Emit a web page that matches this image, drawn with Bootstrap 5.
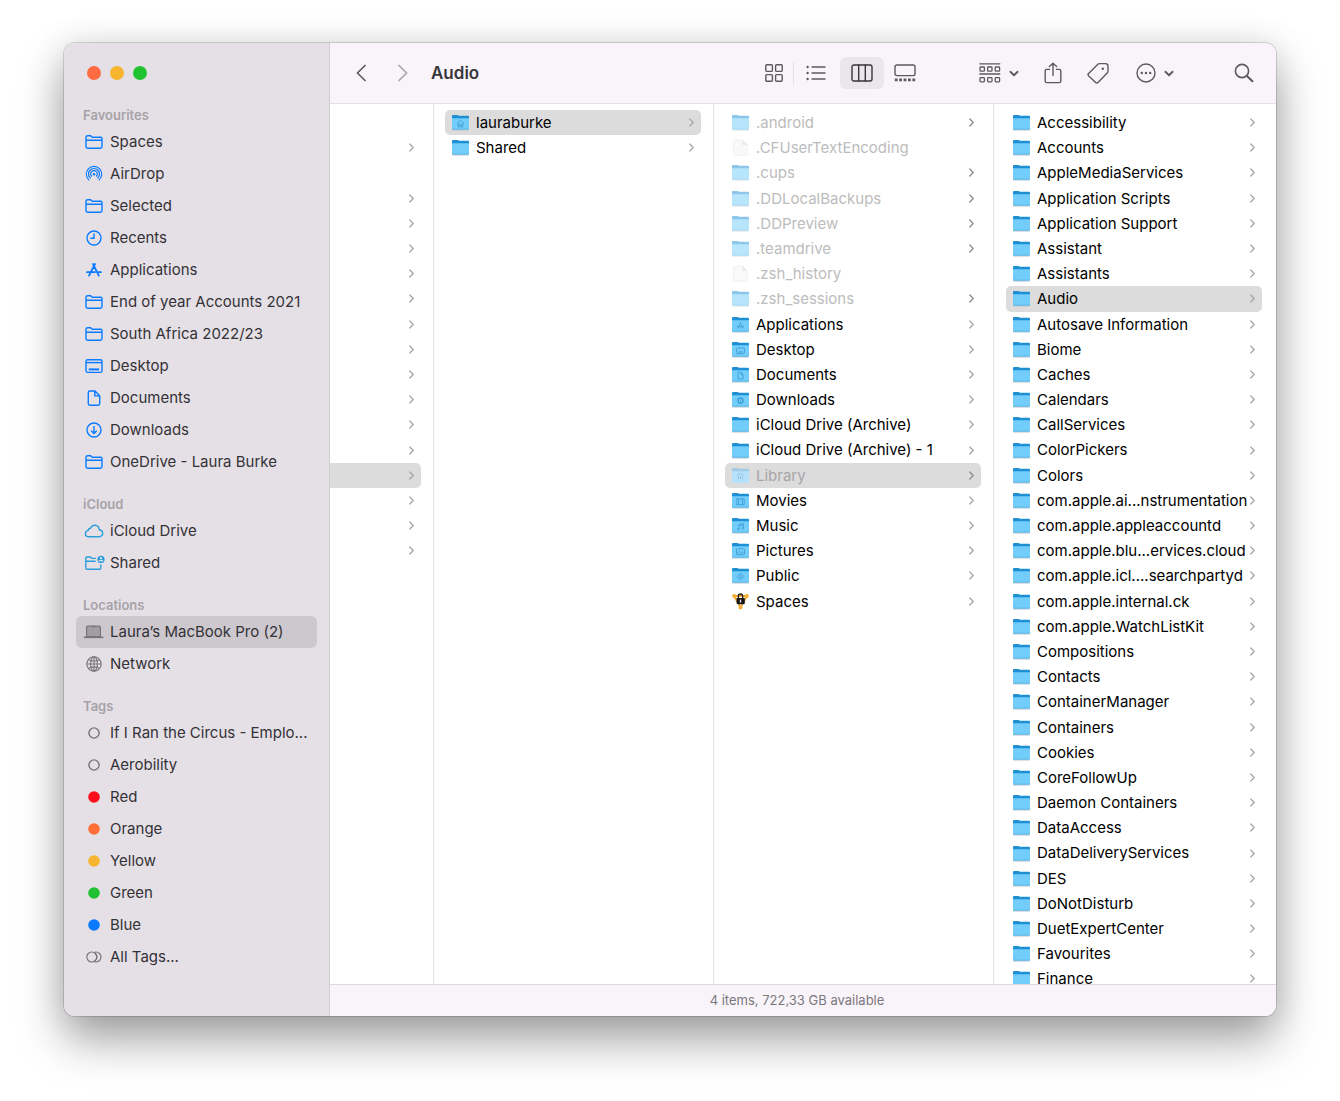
<!DOCTYPE html>
<html lang="en">
<head>
<meta charset="utf-8">
<meta name="viewport" content="width=device-width, initial-scale=1">
<title>Audio</title>
<link rel="stylesheet" href="https://cdn.jsdelivr.net/npm/bootstrap@5.3.0/dist/css/bootstrap.min.css">
<style>
  body { font-family: Inter, "Liberation Sans", sans-serif; font-size: 15px; color: #000; background: #fff; padding: 43px 64px 85px; height: 100vh; }
  a { color: inherit; text-decoration: none; }
  .finder { height: 100%; border-radius: 11px; background: #fff; box-shadow: 0 0 0 1px rgba(0,0,0,.14), 0 24px 46px rgba(0,0,0,.36), 0 0 34px rgba(0,0,0,.1); }

  /* sidebar */
  .side { flex: 0 0 266px; background: #e5e0e6; border-right: 1px solid #d0ccd1; padding: 0 12px; color: #343236; }
  .lights { height: 62px; padding-left: 11px; padding-bottom: 2px; gap: 9px; }
  .light { width: 14px; height: 14px; border: 0; padding: 0; border-radius: 50%; }
  .side-title { font-size: 13px; font-weight: 600; line-height: 20px; color: #a7a2a8; margin: 0 0 1px; padding-left: 7px; }
  .side-group { margin-bottom: 16px; }
  .side-row { height: 32px; padding-left: 7px; gap: 5px; border-radius: 6px; white-space: nowrap; }
  .side-row.current { background: #cdc8ce; }
  .side-row svg { flex: none; width: 22px; height: 20px; color: #0a7bff; fill: none; stroke: currentColor; stroke-width: 1.4; }
  .side-row svg.gray { color: #77747a; }
  .side-row svg.sky { color: #2a9fdc; }

  /* toolbar */
  .bar { flex: 0 0 61px; background: #f9f4fa; border-bottom: 1px solid #e3dfe4; padding: 0 10px 0 10px; }
  .tool { height: 32px; padding: 0; border: 0; border-radius: 6px; background: transparent; color: #5c595e; }
  .tool svg { fill: none; stroke: currentColor; stroke-width: 1.4; stroke-linecap: round; stroke-linejoin: round; display: block; }
  .tool.pressed { background: #ebe6ec; color: #38363a; }
  .w-nav { width: 42px; } .w-sm { width: 38px; } .w-md { width: 44px; } .w-lg { width: 60px; }
  .views { margin-right: 43px; }
  .views .list-tool { margin-right: 2px; }
  .actions { margin-right: 37px; }
  .actions .lead-tool { margin-right: 2px; }
  .actions .tag-tool { margin: 0 5px 0 1px; }
  .rule { width: 1px; height: 23px; background: #e5e0e6; }
  .bar h1 { font-size: 17px; font-weight: 600; line-height: 24px; color: #38363a; margin: 0; padding-left: 7px; }

  /* columns */
  .pane { flex: 0 0 280px; border-right: 1px solid #e3e3e3; padding: 6px 12px 0 11px; overflow: hidden; }
  .pane.cut { flex: 1 1 0; padding-left: 0; }
  .pane.last { flex-basis: 282px; padding: 6px 14px 0 12px; border-right: 0; }
  .entry { line-height: 1.68; padding: 0 7px; border-radius: 5px; white-space: nowrap; }
  .entry::before { content: "\200b"; }
  .entry.picked { background: #dcdcdc; }
  .cut .entry.picked { border-radius: 0 5px 5px 0; }
  .entry .pic { flex: none; width: 17px; height: 17px; margin-right: 7px; }
  .entry .arrow { flex: none; width: 5px; height: 9px; margin-left: auto; fill: none; stroke: #a6a6a6; stroke-width: 1.3; stroke-linecap: round; stroke-linejoin: round; }
  .entry.faded { color: #bcbcbc; }
  .entry.faded .pic { opacity: .5; }
  .entry.faded .arrow { stroke: #8c8c8c; }
  .entry.faded.picked { color: #a6a6a6; }
  .entry.faded.picked .pic { opacity: 1; }

  .status { flex: 0 0 32px; background: #f9f4fa; border-top: 1px solid #dcd8dd; font-size: 13px; color: #7b787d; padding-right: 12px; }
</style>
<script src="https://cdn.jsdelivr.net/npm/bootstrap@5.3.0/dist/js/bootstrap.bundle.min.js"></script>
</head>
<body>
<svg class="d-none" aria-hidden="true">
  <symbol id="s-folder" viewBox="0 0 22 20"><path d="M3 15V5.2Q3 3.7 4.5 3.7H7.6L9.2 5.2H17.5Q19 5.2 19 6.7V14.6Q19 16.2 17.4 16.2H4.6Q3 16.2 3 14.6ZM3 8.2H19"/></symbol>
  <symbol id="s-airdrop" viewBox="0 0 22 20"><g stroke-width="1.2"><path d="M6.3 16.2A7.7 7.7 0 1 1 15.7 16.2M7.6 14.3A5.5 5.5 0 1 1 14.4 14.3M8.9 12.5A3.3 3.3 0 1 1 13.1 12.5"/></g><circle cx="11" cy="10.2" r="1.2" fill="currentColor" stroke="none"/></symbol>
  <symbol id="s-clock" viewBox="0 0 22 20"><circle cx="11" cy="10" r="7"/><path d="M11 5.4V10.3H7.4"/></symbol>
  <symbol id="s-apps" viewBox="0 0 22 20"><path stroke-width="1.8" stroke-linecap="round" d="M10 4 15.8 15.6M12 4 6 15.6M4 12.2H12M15.2 12.2H18"/></symbol>
  <symbol id="s-desktop" viewBox="0 0 22 20"><rect x="3" y="3.8" width="16" height="12.6" rx="1.6"/><path d="M3 6.6H19"/><path stroke-width="2" d="M5.8 13.4H16.2"/></symbol>
  <symbol id="s-doc" viewBox="0 0 22 20"><path d="M12 3H6.8Q5.3 3 5.3 4.5V15.8Q5.3 17.2 6.8 17.2H15.2Q16.7 17.2 16.7 15.8V7.8ZM11.8 3.2V7.9H16.5"/></symbol>
  <symbol id="s-down" viewBox="0 0 22 20"><circle cx="11" cy="10" r="7"/><path d="M11 6V13.2M8.3 10.8 11 13.5 13.7 10.8"/></symbol>
  <symbol id="s-cloud" viewBox="0 0 22 20"><path d="M6 15.8Q2.3 15.6 2.4 12.4 2.6 9.9 5.2 9.4 5.2 7.3 7.6 7.2 9 4.2 12 4.3 16 4.6 16.3 8.8 19.8 9.5 19.7 12.5 19.4 15.6 16 15.8Z"/></symbol>
  <symbol id="s-shared" viewBox="0 0 22 20"><path d="M12.8 5.4H8.8L7.4 4H4Q2.8 4 2.8 5.2V15Q2.8 16.3 4 16.3H16.4Q17.8 16.3 17.8 15V11.5M2.8 8.2H12.6"/><circle cx="18" cy="6.4" r="3.6" fill="currentColor" stroke="none"/><circle cx="18" cy="5.2" r="1.1" fill="#e5e0e6" stroke="none"/><path d="M16 8.2Q18 6.4 20 8.2" stroke="#e5e0e6" stroke-width="1.2"/></symbol>
  <symbol id="s-laptop" viewBox="0 0 22 20"><path d="M3.6 14.6V5.4Q3.6 4.2 4.8 4.2H16.2Q17.4 4.2 17.4 5.4V14.6Z" fill="#a29ea4" stroke-width="1.2"/><path d="M.8 15.3H20.4" stroke-width="1.6"/><path d="M9 4.6H12"/></symbol>
  <symbol id="s-globe" viewBox="0 0 22 20"><g stroke-width="1.1"><circle cx="11" cy="10" r="7.2"/><ellipse cx="11" cy="10" rx="3.4" ry="7.2"/><path d="M11 2.8V17.2M3.8 10H18.2M5.4 5.8Q11 8.4 16.6 5.8M5.4 14.2Q11 11.6 16.6 14.2"/></g></symbol>
  <symbol id="s-ring" viewBox="0 0 22 20"><circle cx="11" cy="10" r="5.1"/></symbol>
  <symbol id="s-dot" viewBox="0 0 22 20"><circle cx="11" cy="10" r="5.8" fill="currentColor" stroke="none"/></symbol>
  <symbol id="s-all" viewBox="0 0 22 20"><g stroke-width="1.2"><circle cx="8.8" cy="10" r="5"/><path d="M11.6 5.2Q12.2 5 13 5A5 5 0 0 1 13 15Q12.2 15 11.6 14.8"/><path d="M11.8 5.6Q16 10 11.8 14.4" /></g></symbol>

  <symbol id="arrow" viewBox="0 0 5 9"><path d="M.8 1 4.2 4.5.8 8"/></symbol>
  <symbol id="folder" viewBox="0 0 17 17"><path d="M0 15.2H17V15.8Q17 16.4 16.2 16.4H.8Q0 16.4 0 15.8Z" fill="#b9c4cc"/><path d="M0 2Q0 .9 1 .9H5.2Q5.8 .9 6.2 1.3L6.8 1.8H16Q17 1.8 17 2.8V6H0Z" fill="#1d8fd2"/><path d="M0 4.2H17V14.6Q17 15.6 16 15.6H1Q0 15.6 0 14.6Z" fill="#72cdfa"/><path d="M0 14V14.6Q0 15.6 1 15.6H16Q17 15.6 17 14.6V14Q17 14.8 16 14.8H1Q0 14.8 0 14Z" fill="#4fb0e4"/></symbol>
  <symbol id="folder-pale" viewBox="0 0 17 17"><path d="M0 2Q0 .9 1 .9H5.2Q5.8 .9 6.2 1.3L6.8 1.8H16Q17 1.8 17 2.8V6H0Z" fill="#a0cbe6"/><path d="M0 4.2H17V15Q17 16 16 16H1Q0 16 0 15Z" fill="#b6e1fa"/></symbol>
  <symbol id="file" viewBox="0 0 17 17"><path d="M2 1H10.5L15.5 6V15Q15.5 16.3 14.3 16.3H2.6Q1.4 16.3 1.4 15V2Q1.4 1 2 1Z" fill="#f4f4f4" stroke="#e2e2e2" stroke-width=".8"/><path d="M10.5 1V6H15.5Z" fill="#d4d4d4"/></symbol>
  <symbol id="g-home" viewBox="0 0 17 17"><path d="M5 9.5 8.5 6.4 12 9.5M6.2 9V13H7.8V10.5H9.2V13H10.8V9"/></symbol>
  <symbol id="g-apps" viewBox="0 0 17 17"><path d="M8.5 6.5 5.8 12.5M8.5 6.5 11.2 12.5M5 10.7H12"/></symbol>
  <symbol id="g-desk" viewBox="0 0 17 17"><rect x="4.5" y="7" width="8" height="5.6" rx="1"/><path d="M6 11H11"/></symbol>
  <symbol id="g-doc" viewBox="0 0 17 17"><path d="M9 6.3H6V13H11V8.3ZM9 6.3V8.3H11"/></symbol>
  <symbol id="g-down" viewBox="0 0 17 17"><circle cx="8.5" cy="9.6" r="2.6" stroke-width="1.5"/><path d="M8.5 8.2V11"/></symbol>
  <symbol id="g-lib" viewBox="0 0 17 17"><path stroke="#8fc3e2" d="M5.4 8 8.5 6.6 11.6 8M6.5 9V12M8.5 9V12M10.5 9V12"/></symbol>
  <symbol id="g-film" viewBox="0 0 17 17"><path d="M4.8 6.8H12.2V12.6H4.8ZM6.6 6.8V12.6M10.4 6.8V12.6"/></symbol>
  <symbol id="g-music" viewBox="0 0 17 17"><path d="M7 12V7.4L11.4 6.6V11.2M7 8.6 11.4 7.8"/><circle cx="6.2" cy="12" r=".8"/><circle cx="10.6" cy="11.3" r=".8"/></symbol>
  <symbol id="g-pic" viewBox="0 0 17 17"><rect x="4.5" y="6.8" width="8" height="5.8" rx=".8"/><path d="M4.8 11.8 7.4 9.4 9.4 11 10.6 10 12.4 11.6"/></symbol>
  <symbol id="g-pub" viewBox="0 0 17 17"><path d="M8.5 6 12 9.6 8.5 13.2 5 9.6Z"/><circle cx="8.5" cy="9.6" r="1"/></symbol>
  <symbol id="spaces" viewBox="0 0 17 17"><path d="M2 3 15 3 8.5 14.5Z" fill="none" stroke="#f0a92e" stroke-width="1.8"/><circle cx="2.2" cy="3" r="2" fill="#f5ae31"/><circle cx="14.8" cy="3" r="2" fill="#f5ae31"/><circle cx="8.5" cy="14.6" r="2" fill="#f5ae31"/><path d="M6.3 5V3.2Q6.3 1 8.5 1T10.7 3.2V5" fill="none" stroke="#222" stroke-width="1.3"/><path d="M4.6 5H12.8V10Q12.8 11.3 11.3 11.3H6.1Q4.6 11.3 4.6 10Z" fill="#141414"/><path d="M8.5 6.6V9.6" stroke="#ddd" stroke-width="1.4"/></symbol>
</svg>

<div class="finder d-flex overflow-hidden">
  <nav class="side overflow-hidden" aria-label="Sidebar">
    <div class="lights d-flex align-items-center">
      <button class="light" type="button" aria-label="Close" style="background:#ff6b43"></button>
      <button class="light" type="button" aria-label="Minimise" style="background:#f7b52f"></button>
      <button class="light" type="button" aria-label="Zoom" style="background:#20c232"></button>
    </div>
    <section class="side-group">
      <h2 class="side-title">Favourites</h2>
      <a href="#" class="side-row d-flex align-items-center"><svg><use href="#s-folder"/></svg>Spaces</a>
      <a href="#" class="side-row d-flex align-items-center"><svg><use href="#s-airdrop"/></svg>AirDrop</a>
      <a href="#" class="side-row d-flex align-items-center"><svg><use href="#s-folder"/></svg>Selected</a>
      <a href="#" class="side-row d-flex align-items-center"><svg><use href="#s-clock"/></svg>Recents</a>
      <a href="#" class="side-row d-flex align-items-center"><svg><use href="#s-apps"/></svg>Applications</a>
      <a href="#" class="side-row d-flex align-items-center"><svg><use href="#s-folder"/></svg>End of year Accounts 2021</a>
      <a href="#" class="side-row d-flex align-items-center"><svg><use href="#s-folder"/></svg>South Africa 2022/23</a>
      <a href="#" class="side-row d-flex align-items-center"><svg><use href="#s-desktop"/></svg>Desktop</a>
      <a href="#" class="side-row d-flex align-items-center"><svg><use href="#s-doc"/></svg>Documents</a>
      <a href="#" class="side-row d-flex align-items-center"><svg><use href="#s-down"/></svg>Downloads</a>
      <a href="#" class="side-row d-flex align-items-center"><svg><use href="#s-folder"/></svg>OneDrive - Laura Burke</a>
    </section>
    <section class="side-group">
      <h2 class="side-title">iCloud</h2>
      <a href="#" class="side-row d-flex align-items-center"><svg class="sky"><use href="#s-cloud"/></svg>iCloud Drive</a>
      <a href="#" class="side-row d-flex align-items-center"><svg class="sky"><use href="#s-shared"/></svg>Shared</a>
    </section>
    <section class="side-group">
      <h2 class="side-title">Locations</h2>
      <a href="#" class="side-row current d-flex align-items-center"><svg class="gray"><use href="#s-laptop"/></svg>Laura’s MacBook Pro (2)</a>
      <a href="#" class="side-row d-flex align-items-center"><svg class="gray"><use href="#s-globe"/></svg>Network</a>
    </section>
    <section class="side-group">
      <h2 class="side-title">Tags</h2>
      <a href="#" class="side-row d-flex align-items-center"><svg class="gray"><use href="#s-ring"/></svg>If I Ran the Circus - Emplo...</a>
      <a href="#" class="side-row d-flex align-items-center"><svg class="gray"><use href="#s-ring"/></svg>Aerobility</a>
      <a href="#" class="side-row d-flex align-items-center"><svg style="color:#fd0d1b"><use href="#s-dot"/></svg>Red</a>
      <a href="#" class="side-row d-flex align-items-center"><svg style="color:#ff7038"><use href="#s-dot"/></svg>Orange</a>
      <a href="#" class="side-row d-flex align-items-center"><svg style="color:#f7b52f"><use href="#s-dot"/></svg>Yellow</a>
      <a href="#" class="side-row d-flex align-items-center"><svg style="color:#20c232"><use href="#s-dot"/></svg>Green</a>
      <a href="#" class="side-row d-flex align-items-center"><svg style="color:#0a7bff"><use href="#s-dot"/></svg>Blue</a>
      <a href="#" class="side-row d-flex align-items-center"><svg class="gray"><use href="#s-all"/></svg>All Tags...</a>
    </section>
  </nav>

  <div class="d-flex flex-column flex-grow-1 overflow-hidden">
    <header class="bar d-flex align-items-center">
      <button class="tool w-nav d-flex align-items-center justify-content-center" type="button" aria-label="Back"><svg width="10" height="18" viewBox="0 0 10 18"><path stroke-width="1.7" d="M9 1.5 1.4 9 9 16.5"/></svg></button>
      <button class="tool w-nav d-flex align-items-center justify-content-center opacity-50" type="button" aria-label="Forward"><svg width="10" height="18" viewBox="0 0 10 18"><path stroke-width="1.7" d="M1 1.5 8.6 9 1 16.5"/></svg></button>
      <h1>Audio</h1>

      <div class="views d-flex align-items-center ms-auto">
        <button class="tool w-sm d-flex align-items-center justify-content-center" type="button" aria-label="Icons"><svg width="18" height="18" viewBox="0 0 18 18"><rect x=".8" y=".8" width="6.6" height="6.6" rx="1"/><rect x="10.6" y=".8" width="6.6" height="6.6" rx="1"/><rect x=".8" y="10.6" width="6.6" height="6.6" rx="1"/><rect x="10.6" y="10.6" width="6.6" height="6.6" rx="1"/></svg></button>
        <span class="rule"></span>
        <button class="tool list-tool w-md d-flex align-items-center justify-content-center" type="button" aria-label="List"><svg width="20" height="16" viewBox="0 0 20 16"><path d="M6 2H19M6 8H19M6 14H19"/><path stroke-width="2.4" d="M1.6 2V2M1.6 8V8M1.6 14V14"/></svg></button>
        <button class="tool w-md pressed d-flex align-items-center justify-content-center" type="button" aria-label="Columns" aria-pressed="true"><svg width="22" height="18" viewBox="0 0 22 18"><rect x="1" y="1" width="20" height="16" rx="2"/><path d="M7.7 1V17M14.3 1V17"/></svg></button>
        <button class="tool w-nav d-flex align-items-center justify-content-center" type="button" aria-label="Gallery"><svg width="22" height="18" viewBox="0 0 22 18"><rect x="1" y="1" width="20" height="10.6" rx="1.8"/><path stroke-width="2.8" stroke-linecap="butt" stroke-dasharray="2.8 1.6" d="M.8 15.8H21.4"/></svg></button>
      </div>
      <div class="actions d-flex align-items-center">
        <button class="tool lead-tool w-lg d-flex align-items-center justify-content-center" type="button" aria-label="Group"><svg width="40" height="20" viewBox="0 0 40 20"><path d="M.8.8H20.8M.8 11H20.8" stroke-width="1.3"/><g stroke-width="1.3"><rect x="1" y="4" width="4.4" height="4.2" rx=".8"/><rect x="8.6" y="4" width="4.4" height="4.2" rx=".8"/><rect x="16.2" y="4" width="4.4" height="4.2" rx=".8"/><rect x="1" y="14.6" width="4.4" height="4.2" rx=".8"/><rect x="8.6" y="14.6" width="4.4" height="4.2" rx=".8"/><rect x="16.2" y="14.6" width="4.4" height="4.2" rx=".8"/></g><path stroke-width="1.9" d="M31.4 8.8 35 12.2 38.6 8.8"/></svg></button>
        <button class="tool w-md d-flex align-items-center justify-content-center" type="button" aria-label="Share"><svg width="18" height="22" viewBox="0 0 18 22"><path d="M5.6 7.4H2.8Q1.2 7.4 1.2 9V19Q1.2 20.6 2.8 20.6H15.2Q16.8 20.6 16.8 19V9Q16.8 7.4 15.2 7.4H12.4M9 13.4V1.2M5.4 4.6 9 1.2 12.6 4.6"/></svg></button>
        <button class="tool tag-tool w-md d-flex align-items-center justify-content-center" type="button" aria-label="Tags"><svg width="22" height="22" viewBox="0 0 22 22"><path d="M12.6 1.6H18.4Q21 1.6 21 4.2V9.2Q21 10.2 20.2 11L11 20.4Q9.8 21.6 8.6 20.4L1.6 13.8Q.4 12.6 1.6 11.4L10.6 2.4Q11.4 1.6 12.6 1.6Z"/><circle cx="15.8" cy="6.8" r="1.2" fill="currentColor" stroke="none"/></svg></button>
        <button class="tool w-lg d-flex align-items-center justify-content-center" type="button" aria-label="Actions"><svg width="38" height="20" viewBox="0 0 38 20"><circle cx="10" cy="10" r="9"/><path stroke-width="2.4" d="M5.8 10V10M10 10V10M14.2 10V10"/><path stroke-width="1.9" d="M29.4 8.8 33 12.2 36.6 8.8"/></svg></button>
      </div>
      <button class="tool w-md d-flex align-items-center justify-content-center" type="button" aria-label="Search"><svg width="20" height="20" viewBox="0 0 20 20"><circle cx="8" cy="8" r="6.6" stroke-width="1.6"/><path stroke-width="2.1" d="M13 13 18.4 18.2"/></svg></button>
    </header>

    <main class="d-flex flex-grow-1 overflow-hidden">
      <div class="pane cut" id="pane-root"></div>
      <div class="pane" id="pane-users"></div>
      <div class="pane" id="pane-home"></div>
      <div class="pane last" id="pane-library"></div>
    </main>
    <footer class="status d-flex align-items-center justify-content-center">4 items, 722,33 GB available</footer>
  </div>
</div>

<script>
  // Entry: [name, options]. glyph = mark on the folder, icon = other icon, leaf = no arrow.
  const faded = { faded: true }, note = { faded: true, icon: 'file', leaf: true };
  const users = [['lauraburke', { glyph: 'home', picked: true }], ['Shared']];
  const home = [
    ['.android', faded], ['.CFUserTextEncoding', note], ['.cups', faded], ['.DDLocalBackups', faded],
    ['.DDPreview', faded], ['.teamdrive', faded], ['.zsh_history', note], ['.zsh_sessions', faded],
    ['Applications', { glyph: 'apps' }], ['Desktop', { glyph: 'desk' }], ['Documents', { glyph: 'doc' }],
    ['Downloads', { glyph: 'down' }], ['iCloud Drive (Archive)'], ['iCloud Drive (Archive) - 1'],
    ['Library', { icon: 'folder-pale', glyph: 'lib', faded: true, picked: true }], ['Movies', { glyph: 'film' }],
    ['Music', { glyph: 'music' }], ['Pictures', { glyph: 'pic' }], ['Public', { glyph: 'pub' }],
    ['Spaces', { icon: 'spaces' }]
  ];
  const library = ['Accessibility', 'Accounts', 'AppleMediaServices', 'Application Scripts', 'Application Support',
    'Assistant', 'Assistants', 'Audio', 'Autosave Information', 'Biome', 'Caches', 'Calendars', 'CallServices',
    'ColorPickers', 'Colors', 'com.apple.ai...nstrumentation', 'com.apple.appleaccountd',
    'com.apple.blu...ervices.cloud', 'com.apple.icl....searchpartyd', 'com.apple.internal.ck',
    'com.apple.WatchListKit', 'Compositions', 'Contacts', 'ContainerManager', 'Containers', 'Cookies',
    'CoreFollowUp', 'Daemon Containers', 'DataAccess', 'DataDeliveryServices', 'DES', 'DoNotDisturb',
    'DuetExpertCenter', 'Favourites', 'Finance'].map(n => [n, { picked: n === 'Audio' }]);
  // The first column is scrolled so that only its arrows show.
  const root = Array.from({ length: 18 }, (_, i) => ['', { bare: true, leaf: i === 0 || i === 2, picked: i === 14 }]);

  function row([name, o = {}]) {
    const cls = 'entry d-flex align-items-center' + (o.picked ? ' picked' : '') + (o.faded ? ' faded' : '');
    const mark = o.glyph ? `<g fill="none" stroke="#3f9fd6" stroke-width=".9"><use href="#g-${o.glyph}"/></g>` : '';
    const pic = o.bare ? '' : `<svg class="pic" viewBox="0 0 17 17"><use href="#${o.icon || 'folder'}"/>${mark}</svg><span>${name}</span>`;
    const arrow = o.leaf ? '' : '<svg class="arrow"><use href="#arrow"/></svg>';
    return o.bare ? `<div class="${cls}">${arrow}</div>` : `<a href="#" class="${cls}">${pic}${arrow}</a>`;
  }
  for (const [id, list] of Object.entries({ root, users, home, library }))
    document.getElementById('pane-' + id).innerHTML = list.map(row).join('');
</script>
</body>
</html>
